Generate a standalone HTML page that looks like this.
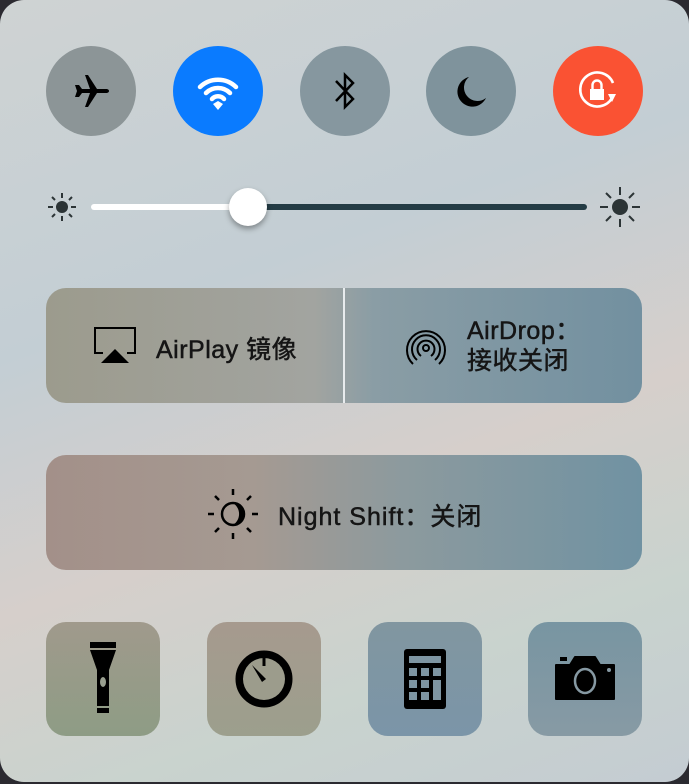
<!DOCTYPE html>
<html><head><meta charset="utf-8"><style>
*{margin:0;padding:0;box-sizing:border-box}
body{width:689px;height:784px;background:#2b2a30;overflow:hidden;position:relative;font-family:"Liberation Sans","Noto Sans CJK SC",sans-serif;color:#151515}
.panel{position:absolute;left:0;top:0;width:689px;height:782px;border-radius:24px;background:linear-gradient(160deg,#cfd3d3 0%,#c3ced4 35%,#d6cfcb 60%,#c9d3ce 80%,#c4ccd2 100%)}
.c{position:absolute;top:46px;width:90px;height:90px;border-radius:50%;background:#8a979c;display:flex;align-items:center;justify-content:center}
.blk{position:absolute;border-radius:20px}
.sq{position:absolute;top:622px;width:114px;height:114px;border-radius:20px;display:flex;align-items:center;justify-content:center}
.t{position:absolute;font-size:25px;white-space:nowrap;-webkit-text-stroke:0.5px #151515;letter-spacing:0.5px}
</style></head><body>
<div class="panel"></div>
<div class="c" style="left:46px;background:#8c9597"><svg width="40" height="40" viewBox="0 0 40 40"><path d="M4 16h4l3 4h8L14 6h3l9 14h9c2 0 3 1 3 2s-1 2-3 2h-9l-9 14h-3l5-14h-8l-3 4H4l2-6z" fill="#000" transform="translate(0,-2)"/></svg></div>
<div class="c" style="left:173px;background:#0a7bff"><svg width="50" height="40" viewBox="0 0 50 40"><path d="M7 16a26 26 0 0 1 36 0M13 22a17 17 0 0 1 24 0M19 28a8 8 0 0 1 12 0" stroke="#fff" stroke-width="4.5" fill="none" stroke-linecap="round"/><path d="M20 33l5-3 5 3-5 6z" fill="#fff"/></svg></div>
<div class="c" style="left:300px;background:#86979f"><svg width="30" height="44" viewBox="0 0 30 44"><path d="M6 12l17 18-8 8V6l8 8L6 32" stroke="#000" stroke-width="2.5" fill="none"/></svg></div>
<div class="c" style="left:426px;background:#7f939c"><svg width="40" height="40" viewBox="0 0 40 40"><path d="M18 6A15 15 0 1 0 35 27 13 13 0 0 1 18 6z" fill="#000"/></svg></div>
<div class="c" style="left:553px;background:#fa5233"><svg width="50" height="50" viewBox="0 0 50 50"><path d="M39 32A17 17 0 1 1 40 17" stroke="#fff" stroke-width="2.6" fill="none"/><path d="M35 28l8 0-4 8z" fill="#fff"/><rect x="17" y="23" width="14" height="11" fill="#fff"/><path d="M19.5 23v-4a4.5 4.5 0 0 1 9 0v4" stroke="#fff" stroke-width="2.4" fill="none"/></svg></div>
<!-- slider -->
<svg style="position:absolute;left:44px;top:189px" width="36" height="36" viewBox="0 0 36 36"><circle cx="18" cy="18" r="6" fill="#2c3436"/><g stroke="#2c3436" stroke-width="2"><path d="M18 4v5M18 27v5M4 18h5M27 18h5M8 8l3 3M25 25l3 3M8 28l3-3M25 11l3-3"/></g></svg>
<div style="position:absolute;left:91px;top:204px;width:160px;height:6px;border-radius:3px;background:#fff"></div>
<div style="position:absolute;left:245px;top:204px;width:342px;height:6px;border-radius:3px;background:#243c45"></div>
<div style="position:absolute;left:229px;top:188px;width:38px;height:38px;border-radius:50%;background:#fff;box-shadow:0 3px 6px rgba(0,0,0,.35)"></div>
<svg style="position:absolute;left:598px;top:185px" width="44" height="44" viewBox="0 0 44 44"><circle cx="22" cy="22" r="8" fill="#2c3436"/><g stroke="#2c3436" stroke-width="2"><path d="M22 2v8M22 34v8M2 22h8M34 22h8M8 8l5 5M31 31l5 5M8 36l5-5M31 13l5-5"/></g></svg>
<!-- airplay/airdrop -->
<div class="blk" style="left:46px;top:288px;width:596px;height:115px;background:linear-gradient(90deg,#9c9b8d 0%,#a2a4a0 45%,#8a9da5 55%,#7290a0 100%)"></div>
<div style="position:absolute;left:343px;top:288px;width:2px;height:115px;background:#e8ecee"></div>
<svg style="position:absolute;left:93px;top:326px" width="44" height="40" viewBox="0 0 44 40"><path d="M10 27H2V2h40v25h-8" stroke="#000" stroke-width="2" fill="none"/><path d="M8 37l14-14 14 14z" fill="#000"/></svg>
<div class="t" style="left:156px;top:330px">AirPlay 镜像</div>
<svg style="position:absolute;left:404px;top:325px" width="44" height="44" viewBox="0 0 44 44"><g stroke="#000" stroke-width="2" fill="none"><path d="M9 39A19 19 0 1 1 35 39"/><path d="M13 35A14 14 0 1 1 31 35"/><path d="M17 31A8.5 8.5 0 1 1 27 31"/><circle cx="22" cy="23" r="3"/></g></svg>
<div class="t" style="left:467px;top:316px;line-height:30px">AirDrop：<br>接收关闭</div>
<!-- night shift -->
<div class="blk" style="left:46px;top:455px;width:596px;height:115px;background:linear-gradient(90deg,#a39089 0%,#a59a92 35%,#8c9a9e 60%,#7092a2 100%)"></div>
<svg style="position:absolute;left:206px;top:487px" width="54" height="54" viewBox="0 0 54 54"><circle cx="27" cy="27" r="11" stroke="#000" stroke-width="2.5" fill="none"/><path d="M27 16a11 11 0 0 1 0 22 13 13 0 0 0 0-22z" fill="#000"/><path d="M27 16a11 11 0 0 1 11 11 11 11 0 0 1-11 11 9 11 0 0 0 0-22z" fill="#000"/><g stroke="#000" stroke-width="2.5"><path d="M27 2v6M27 46v6M2 27h6M46 27h6M9 9l4 4M41 41l4 4M9 45l4-4M41 13l4-4"/></g></svg>
<div class="t" style="left:278px;top:497px;letter-spacing:1px">Night Shift：关闭</div>
<!-- bottom -->
<div class="sq" style="left:46px;background:linear-gradient(180deg,#a09a8c,#8e9c85)"><svg width="40" height="74" viewBox="0 0 40 74"><rect x="7" y="0" width="26" height="6" fill="#000"/><path d="M7 8h26l-7 20v36H14V28z" fill="#000"/><ellipse cx="20" cy="40" rx="3" ry="5" fill="#9aa090"/><rect x="14" y="66" width="12" height="5" fill="#000"/></svg></div>
<div class="sq" style="left:207px;background:linear-gradient(180deg,#a69a8e,#9c9f8d)"><svg width="60" height="60" viewBox="0 0 60 60"><circle cx="30" cy="30" r="26" stroke="#000" stroke-width="5" fill="#000"/><circle cx="30" cy="30" r="21" fill="#9c9c8c"/><path d="M30 4v13" stroke="#000" stroke-width="3"/><path d="M18 16l14 14-4 3z" fill="#000"/></svg></div>
<div class="sq" style="left:368px;background:linear-gradient(180deg,#8196a0,#7b95a8)"><svg width="42" height="60" viewBox="0 0 42 60"><rect x="0" y="0" width="42" height="60" rx="3" fill="#000"/><rect x="5" y="7" width="32" height="7" fill="#7e95a2"/><g fill="#7e95a2"><rect x="5" y="19" width="8" height="8"/><rect x="17" y="19" width="8" height="8"/><rect x="29" y="19" width="8" height="8"/><rect x="5" y="31" width="8" height="8"/><rect x="17" y="31" width="8" height="8"/><rect x="29" y="31" width="8" height="20"/><rect x="5" y="43" width="8" height="8"/><rect x="17" y="43" width="8" height="8"/></g></svg></div>
<div class="sq" style="left:528px;background:linear-gradient(180deg,#7895a2,#879aa4)"><svg width="62" height="48" viewBox="0 0 62 48"><rect x="6" y="2" width="7" height="4" fill="#000"/><path d="M2 10h14l5-8h20l5 8h14v34H2z" fill="#000" stroke="#000" stroke-width="2" stroke-linejoin="round"/><ellipse cx="31" cy="26" rx="10" ry="12" stroke="#8699a3" stroke-width="2.5" fill="#000"/><circle cx="55" cy="15" r="2" fill="#8699a3"/></svg></div>
</body></html>
